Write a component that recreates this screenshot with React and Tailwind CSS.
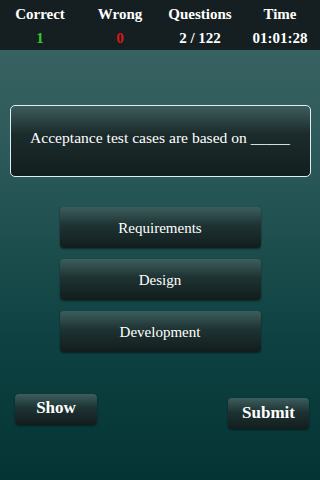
export default function App() {
  const btn =
    "bg-[linear-gradient(to_bottom,#3d5e5e_0%,#1e3232_45%,#121d1d_100%)] shadow-[0_1px_2px_rgba(0,0,0,0.5)]";
  return (
    <div className="w-[320px] h-[480px] overflow-hidden flex flex-col bg-[linear-gradient(to_bottom,#3f6666_0%,#2a5858_35%,#0e4242_70%,#053434_100%)] text-white font-['Liberation_Serif','Times_New_Roman',serif]">
      <div className="h-[50px] bg-[#151f21] grid grid-cols-4 text-center font-bold text-[15px] leading-[18px] pt-[5px] shrink-0">
        <div className="flex flex-col gap-[6px]">
          <span>Correct</span>
          <span className="text-[#2ecc2e]">1</span>
        </div>
        <div className="flex flex-col gap-[6px]">
          <span>Wrong</span>
          <span className="text-[#d81818]">0</span>
        </div>
        <div className="flex flex-col gap-[6px]">
          <span>Questions</span>
          <span>2 / 122</span>
        </div>
        <div className="flex flex-col gap-[6px]">
          <span>Time</span>
          <span>01:01:28</span>
        </div>
      </div>

      <div className="mt-[55px] mx-[10px] w-[301px] h-[72px] rounded-[5px] border border-[#dfeeee] bg-[linear-gradient(to_bottom,#3e5c5c_0%,#1b2b2b_40%,#131f1f_100%)] flex items-center pl-[19px] pb-[6px] text-[15.6px]">
        Acceptance test cases are based on _____
      </div>

      <div className="mt-[30px] flex flex-col items-center gap-[11px]">
        {["Requirements", "Design", "Development"].map((t) => (
          <div
            key={t}
            className={`w-[201px] h-[41px] rounded-[4px] flex items-center justify-center text-[15px] pt-[1px] ${btn}`}
          >
            {t}
          </div>
        ))}
      </div>

      <div className="mt-[42px] flex justify-between items-start px-[15px] pr-[11px]">
        <div
          className={`w-[82px] h-[31px] rounded-[4px] flex items-center justify-center font-bold text-[17px] pb-[4px] ${btn}`}
        >
          Show
        </div>
        <div
          className={`mt-[4px] w-[81px] h-[31px] rounded-[4px] flex items-center justify-center font-bold text-[17px] pb-[1px] ${btn}`}
        >
          Submit
        </div>
      </div>
    </div>
  );
}
